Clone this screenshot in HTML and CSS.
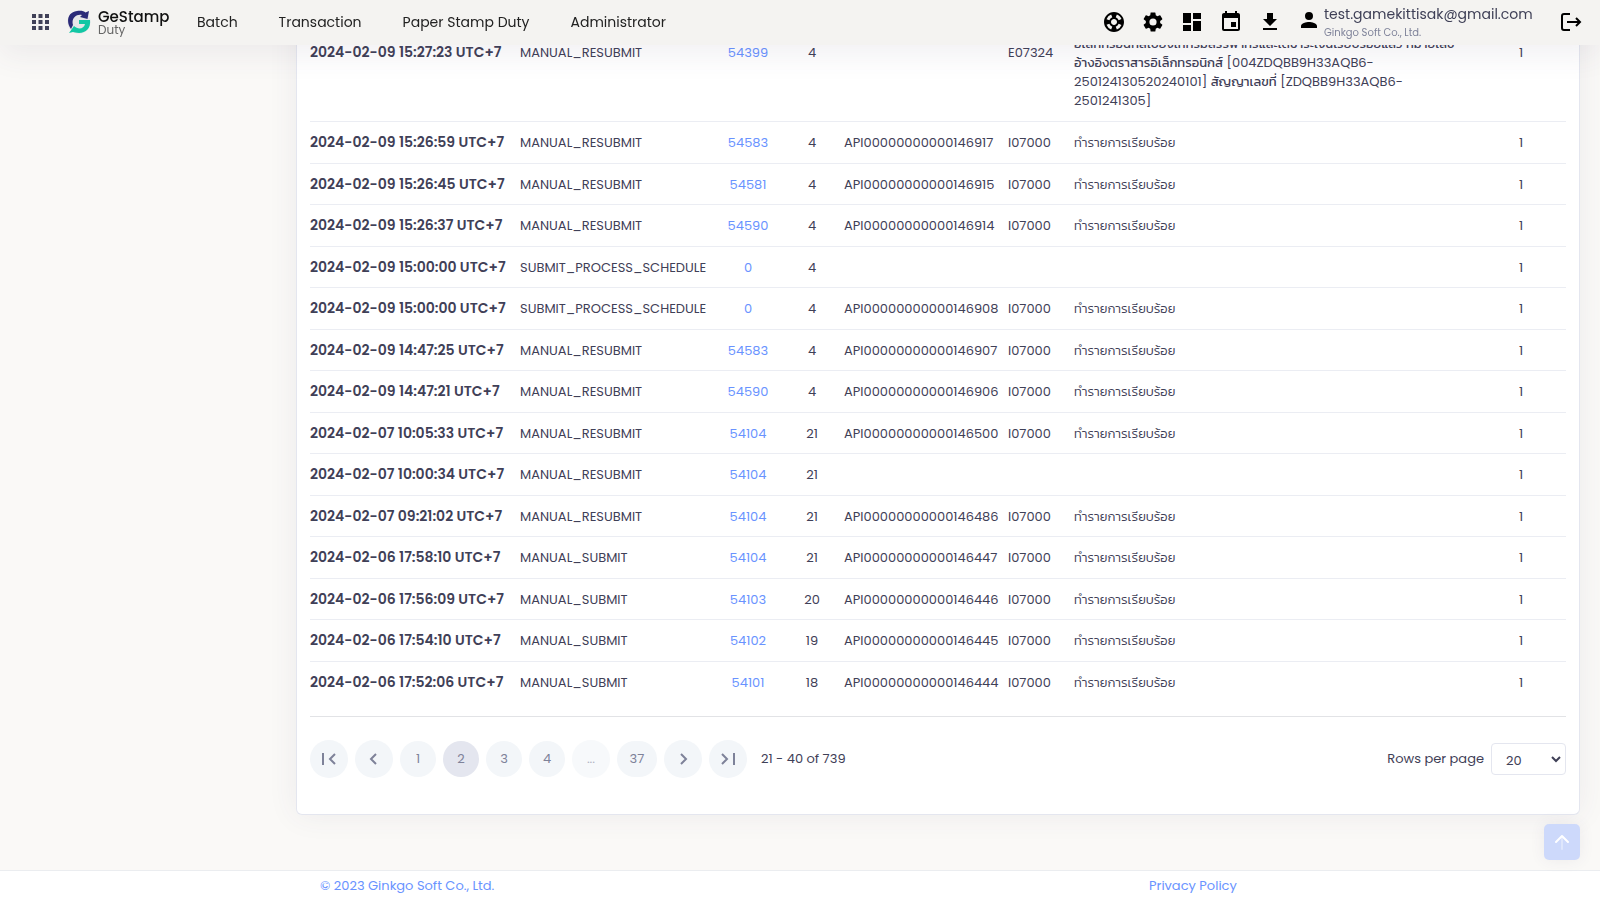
FILE: index.html
```html
<!DOCTYPE html>
<html lang="en">
<head>
<meta charset="utf-8">
<title>GeStamp Duty</title>
<link rel="stylesheet" href="styles.css">
</head>
<body>
<header class="topbar">
  <button class="icon-button apps" aria-label="Apps"><svg width="17" height="16" viewBox="0 0 17 16" fill="#3f4057"><path d="M0 0h4v4H0zM6.500 0h4v4h-4zM13 0h4v4h-4zM0 6h4v4H0zM6.500 6h4v4h-4zM13 6h4v4h-4zM0 12h4v4H0zM6.500 12h4v4h-4zM13 12h4v4h-4z"/></svg></button>
  <a class="brand" href="#">
    <svg width="24" height="24" viewBox="0 0 24 24" aria-hidden="true">
      <circle cx="12" cy="12" r="11.500" fill="#e6e6e8"/>
      <path d="M4 19C-1 13 0 2 10 1c4-.5 7 0 8.500 1.500L22 1l-1.500 8-7.500-2 2-2C9 3.500 4 9 6 15z" fill="#2b2a78"/>
      <path d="M12 10h11c1 8-4 13-11 13-3 0-5-1-6-1l-4 1 5-7c4 4 10 3 11-2h-6z" fill="#12c7a4"/>
    </svg>
    <span class="brand-text"><span class="brand-name">GeStamp</span><span class="brand-sub">Duty</span></span>
  </a>
  <nav class="menu">
    <a href="#">Batch</a><a href="#">Transaction</a><a href="#">Paper Stamp Duty</a><a href="#">Administrator</a>
  </nav>
  <div class="tools">
    <button class="icon-button" aria-label="Support"><svg width="24" height="24" viewBox="0 0 24 24"><path d="M12 2C6.480 2 2 6.480 2 12s4.480 10 10 10 10-4.480 10-10S17.520 2 12 2zm7.460 7.120-2.780 1.150a4.980 4.980 0 0 0-2.950-2.940l1.150-2.780c2.100.8 3.770 2.470 4.580 4.570zM12 15c-1.660 0-3-1.340-3-3s1.340-3 3-3 3 1.340 3 3-1.340 3-3 3zM9.130 4.540l1.170 2.780a5 5 0 0 0-2.980 2.970L4.540 9.130a7.980 7.980 0 0 1 4.590-4.590zM4.540 14.870l2.780-1.150a4.970 4.970 0 0 0 2.970 2.960l-1.170 2.780a7.960 7.960 0 0 1-4.580-4.590zm10.340 4.590-1.150-2.780a4.980 4.980 0 0 0 2.950-2.970l2.780 1.170a8.010 8.010 0 0 1-4.580 4.580z"/></svg></button>
    <button class="icon-button" aria-label="Settings"><svg width="24" height="24" viewBox="0 0 24 24"><path d="M19.140 12.940c.04-.3.060-.61.060-.94 0-.32-.02-.64-.07-.94l2.030-1.580a.49.490 0 0 0 .12-.61l-1.920-3.320a.488.488 0 0 0-.59-.22l-2.390.96c-.5-.38-1.030-.7-1.620-.94l-.36-2.540a.484.484 0 0 0-.48-.41h-3.840c-.24 0-.43.170-.47.410l-.36 2.540c-.59.240-1.130.570-1.620.940l-2.390-.96c-.22-.08-.47 0-.59.220L2.740 8.870c-.12.210-.08.470.12.610l2.030 1.580c-.05.300-.09.630-.09.940s.02.640.07.940l-2.030 1.580a.49.490 0 0 0-.12.610l1.920 3.320c.12.220.37.290.59.220l2.390-.96c.5.380 1.030.700 1.620.940l.36 2.540c.05.240.24.410.48.410h3.840c.24 0 .44-.17.470-.41l.36-2.540c.59-.24 1.130-.56 1.620-.94l2.390.96c.22.080.47 0 .59-.22l1.920-3.320c.12-.22.070-.47-.12-.61zM12 15.600A3.600 3.600 0 1 1 12 8.400a3.600 3.600 0 0 1 0 7.200z"/></svg></button>
    <button class="icon-button" aria-label="Dashboard"><svg width="24" height="24" viewBox="0 0 24 24"><path d="M3 13h8V3H3zm0 8h8v-6H3zm10 0h8V11h-8zm0-18v6h8V3z"/></svg></button>
    <button class="icon-button" aria-label="Calendar"><svg width="24" height="24" viewBox="0 0 24 24"><path d="M17 12h-5v5h5zM16 1v2H8V1H6v2H5c-1.110 0-1.990.9-1.990 2L3 19a2 2 0 0 0 2 2h14c1.100 0 2-.9 2-2V5c0-1.100-.9-2-2-2h-1V1zm3 18H5V8h14z"/></svg></button>
    <button class="icon-button" aria-label="Download"><svg width="24" height="24" viewBox="0 0 24 24"><path d="M19 9h-4V3H9v6H5l7 7zM5 18v2h14v-2z"/></svg></button>
    <div class="user">
      <svg width="24" height="24" viewBox="0 0 24 24" aria-hidden="true"><path d="M12 12a4 4 0 1 0 0-8 4 4 0 0 0 0 8zm0 2c-2.670 0-8 1.340-8 4v2h16v-2c0-2.660-5.330-4-8-4z"/></svg>
      <div class="user-text"><span class="user-mail">test.gamekittisak@gmail.com</span><span class="user-org">Ginkgo Soft Co., Ltd.</span></div>
    </div>
    <button class="icon-button logout" aria-label="Log out"><svg width="22" height="20" viewBox="0 0 22 20" fill="none" stroke="#000" stroke-width="2"><path d="M10 2H4Q2 2 2 4v12q0 2 2 2h6M7 10h13M16 6l4 4-4 4"/></svg></button>
  </div>
</header>

<main class="page">
  <section class="panel">
    <table class="log">
      <colgroup><col class="c-date"><col class="c-type"><col class="c-id"><col class="c-count"><col class="c-ref"><col class="c-code"><col><col class="c-total"></colgroup>
      <tbody>
        <tr class="tall"><th scope="row">2024-02-09 15:27:23 UTC+7</th><td>MANUAL_RESUBMIT</td><td><a href="#">54399</a></td><td>4</td><td></td><td>E07324</td><td class="message">อิเล็กทรอนิกส์ไปยังให้กรมสรรพากรและได้ชำระเงินเรียบร้อยแล้ว หมายเลข<br>อ้างอิงตราสารอิเล็กทรอนิกส์ [004ZDQBB9H33AQB6-<br>250124130520240101] สัญญาเลขที่ [ZDQBB9H33AQB6-<br>2501241305]</td><td>1</td></tr>
        <tr><th scope="row">2024-02-09 15:26:59 UTC+7</th><td>MANUAL_RESUBMIT</td><td><a href="#">54583</a></td><td>4</td><td>API00000000000146917</td><td>I07000</td><td>ทำรายการเรียบร้อย</td><td>1</td></tr>
        <tr><th scope="row">2024-02-09 15:26:45 UTC+7</th><td>MANUAL_RESUBMIT</td><td><a href="#">54581</a></td><td>4</td><td>API00000000000146915</td><td>I07000</td><td>ทำรายการเรียบร้อย</td><td>1</td></tr>
        <tr><th scope="row">2024-02-09 15:26:37 UTC+7</th><td>MANUAL_RESUBMIT</td><td><a href="#">54590</a></td><td>4</td><td>API00000000000146914</td><td>I07000</td><td>ทำรายการเรียบร้อย</td><td>1</td></tr>
        <tr><th scope="row">2024-02-09 15:00:00 UTC+7</th><td>SUBMIT_PROCESS_SCHEDULE</td><td><a href="#">0</a></td><td>4</td><td></td><td></td><td></td><td>1</td></tr>
        <tr><th scope="row">2024-02-09 15:00:00 UTC+7</th><td>SUBMIT_PROCESS_SCHEDULE</td><td><a href="#">0</a></td><td>4</td><td>API00000000000146908</td><td>I07000</td><td>ทำรายการเรียบร้อย</td><td>1</td></tr>
        <tr><th scope="row">2024-02-09 14:47:25 UTC+7</th><td>MANUAL_RESUBMIT</td><td><a href="#">54583</a></td><td>4</td><td>API00000000000146907</td><td>I07000</td><td>ทำรายการเรียบร้อย</td><td>1</td></tr>
        <tr><th scope="row">2024-02-09 14:47:21 UTC+7</th><td>MANUAL_RESUBMIT</td><td><a href="#">54590</a></td><td>4</td><td>API00000000000146906</td><td>I07000</td><td>ทำรายการเรียบร้อย</td><td>1</td></tr>
        <tr><th scope="row">2024-02-07 10:05:33 UTC+7</th><td>MANUAL_RESUBMIT</td><td><a href="#">54104</a></td><td>21</td><td>API00000000000146500</td><td>I07000</td><td>ทำรายการเรียบร้อย</td><td>1</td></tr>
        <tr><th scope="row">2024-02-07 10:00:34 UTC+7</th><td>MANUAL_RESUBMIT</td><td><a href="#">54104</a></td><td>21</td><td></td><td></td><td></td><td>1</td></tr>
        <tr><th scope="row">2024-02-07 09:21:02 UTC+7</th><td>MANUAL_RESUBMIT</td><td><a href="#">54104</a></td><td>21</td><td>API00000000000146486</td><td>I07000</td><td>ทำรายการเรียบร้อย</td><td>1</td></tr>
        <tr><th scope="row">2024-02-06 17:58:10 UTC+7</th><td>MANUAL_SUBMIT</td><td><a href="#">54104</a></td><td>21</td><td>API00000000000146447</td><td>I07000</td><td>ทำรายการเรียบร้อย</td><td>1</td></tr>
        <tr><th scope="row">2024-02-06 17:56:09 UTC+7</th><td>MANUAL_SUBMIT</td><td><a href="#">54103</a></td><td>20</td><td>API00000000000146446</td><td>I07000</td><td>ทำรายการเรียบร้อย</td><td>1</td></tr>
        <tr><th scope="row">2024-02-06 17:54:10 UTC+7</th><td>MANUAL_SUBMIT</td><td><a href="#">54102</a></td><td>19</td><td>API00000000000146445</td><td>I07000</td><td>ทำรายการเรียบร้อย</td><td>1</td></tr>
        <tr><th scope="row">2024-02-06 17:52:06 UTC+7</th><td>MANUAL_SUBMIT</td><td><a href="#">54101</a></td><td>18</td><td>API00000000000146444</td><td>I07000</td><td>ทำรายการเรียบร้อย</td><td>1</td></tr>
      </tbody>
    </table>
    <div class="pager">
      <button class="page-step" aria-label="First page"><svg width="14" height="12" viewBox="0 0 14 12"><path d="M1 0v12M13 1 8 6l5 5"/></svg></button>
      <button class="page-step" aria-label="Previous page"><svg width="14" height="12" viewBox="0 0 14 12"><path d="M9 1 4 6l5 5"/></svg></button>
      <button>1</button>
      <button class="current" aria-current="page">2</button>
      <button>3</button>
      <button>4</button>
      <button class="page-step" disabled>...</button>
      <button class="wide">37</button>
      <button class="page-step" aria-label="Next page"><svg width="14" height="12" viewBox="0 0 14 12"><path d="m5 1 5 5-5 5"/></svg></button>
      <button class="page-step" aria-label="Last page"><svg width="14" height="12" viewBox="0 0 14 12"><path d="M13 0v12M1 1l5 5-5 5"/></svg></button>
      <span class="range">21 - 40 of 739</span>
      <label class="rows-label" for="rows">Rows per page</label>
      <span class="select-wrap">
        <select id="rows"><option>10</option><option selected>20</option><option>50</option></select>
        <svg class="caret" width="10" height="7" viewBox="0 0 10 7" aria-hidden="true"><path d="m1 1 4 4 4-4"/></svg>
      </span>
    </div>
  </section>
</main>

<footer class="footer"><a href="#">© 2023 Ginkgo Soft Co., Ltd.</a><a href="#">Privacy Policy</a></footer>
<button class="to-top" aria-label="Back to top"><svg width="16" height="16" viewBox="0 0 16 16" fill="none" stroke="#fff" stroke-width="2" stroke-linecap="round" stroke-linejoin="round"><path d="M8 3v12" opacity=".35"/><path d="m2 8 6-6 6 6"/></svg></button>
</body>
</html>
```
FILE: styles.css
```css
* { box-sizing: border-box; }

body {
  margin: 0;
  min-height: 100vh;
  display: flex;
  flex-direction: column;
  background: #faf9f7;
  color: #3f4057;
  font: 400 13px/19px Poppins, Kanit, Prompt, Inter, "Open Sans", sans-serif;
}

a { color: #6993ff; text-decoration: none; }

button, select { font: inherit; color: inherit; border: 0; padding: 0; background: none; }

svg { display: block; }

.topbar {
  position: fixed;
  top: 0;
  left: 0;
  right: 0;
  z-index: 2;
  height: 45px;
  padding: 0 18px 2px 32px;
  display: flex;
  align-items: center;
  background: #f4f3f1;
  box-shadow: 0 10px 30px rgba(82, 63, 105, 0.08);
}
.apps { padding-top: 1px; }

.brand { display: flex; align-items: center; gap: 7px; margin-left: 18px; width: 130px; }
.brand-text { display: flex; flex-direction: column; }
.brand-name { font: 500 15px/15px Poppins, Inter, sans-serif; color: #111; }
.brand-sub { font: 400 12px/11px Poppins, Inter, sans-serif; color: #666; }

.menu { display: flex; gap: 41px; padding-top: 2px; font-size: 14px; white-space: nowrap; }
.menu a { color: #222; }

.tools { margin-left: auto; display: flex; align-items: center; gap: 15px; }
.user { display: flex; align-items: center; gap: 3px; }
.user > svg { margin-bottom: 4px; }
.user-text { display: flex; flex-direction: column; width: 221px; padding-top: 1px; }
.user-mail { font-size: 14px; line-height: 21px; }
.user-org { font-size: 10px; line-height: 15px; color: #7e8299; }

.page { flex: 1; padding: 0 20px 0 296px; }

.panel {
  padding: 0 13px 36px;
  background: #fff;
  border: 1px solid #e4e6ef;
  border-top: 0;
  border-radius: 0 0 6px 6px;
  box-shadow: 0 0 30px rgba(82, 63, 105, 0.08);
}

.log { width: 100%; table-layout: fixed; border-collapse: collapse; }
.c-date { width: 202px; }
.c-type { width: 196px; }
.c-id { width: 80px; }
.c-count { width: 48px; }
.c-ref { width: 164px; }
.c-code { width: 66px; }
.c-total { width: 90px; }

.log th, .log td {
  height: 41px;
  padding: 0 0 0 8px;
  text-align: left;
  white-space: nowrap;
  border-bottom: 1px solid #ebedf3;
}
.log tr:nth-child(even) > * { height: 42px; }
.log th { padding-left: 0; font-size: 14px; font-weight: 600; }
.log td:nth-child(7) { font-weight: 300; }
.log td:nth-child(3), .log td:nth-child(4), .log td:last-child { padding: 0; text-align: center; }
.log .tall > *, .log .tall > td:nth-child(n) { vertical-align: top; padding-top: 43px; }
.log .tall > td.message { padding-top: 34px; padding-bottom: 11px; font-weight: 400; }
.log tr:last-child > * { border-bottom: 0; }

.pager {
  display: flex;
  align-items: center;
  gap: 7px;
  margin-top: 13px;
  padding-top: 23px;
  border-top: 1px solid #e2e3e6;
}
.pager button {
  width: 36px;
  height: 36px;
  display: grid;
  place-items: center;
  border-radius: 19px;
  background: #f3f6f9;
  color: #7e8299;
}
.pager .page-step { width: 38px; height: 38px; }
.pager .page-step svg { fill: none; stroke: #7e8299; stroke-width: 2; }
.pager .wide { width: 40px; }
.pager .current { background: #e4e6ef; }
.pager button:disabled { opacity: 0.6; }
.range { margin-left: 7px; }
.rows-label { margin-left: auto; }

.select-wrap { position: relative; }
.select-wrap select {
  appearance: none;
  width: 75px;
  height: 32px;
  padding: 3px 14px 0;
  border: 1px solid #e4e6ef;
  border-radius: 4px;
  background: #fff;
}
.caret {
  position: absolute;
  right: 5px;
  top: 13px;
  fill: none;
  stroke: #3f4057;
  stroke-width: 2;
  pointer-events: none;
}

.footer {
  height: 30px;
  padding: 5px 20px 0 320px;
  display: grid;
  grid-template-columns: 829fr 431fr;
  border-top: 1px solid #ebedf0;
  background: #fff;
}

.to-top {
  position: fixed;
  right: 20px;
  bottom: 40px;
  width: 36px;
  height: 36px;
  display: grid;
  place-items: center;
  border-radius: 5px;
  background: #cdd9fb;
  box-shadow: 0 0 15px rgba(82, 63, 105, 0.08);
}
```
